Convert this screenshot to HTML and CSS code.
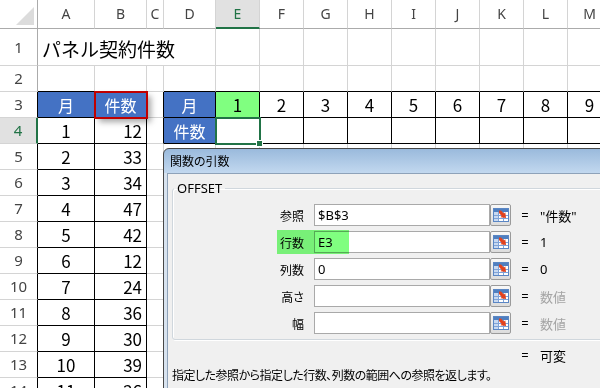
FILE: index.html
```html
<!DOCTYPE html>
<html lang="ja">
<head>
<meta charset="utf-8">
<title>パネル契約件数 - OFFSET</title>
<link rel="stylesheet" href="styles.css">
</head>
<body>
<div class="sheet">
  <div class="corner"></div><div class="ch">A</div><div class="ch">B</div><div class="ch">C</div><div class="ch">D</div><div class="ch on">E</div><div class="ch">F</div><div class="ch">G</div><div class="ch">H</div><div class="ch">I</div><div class="ch">J</div><div class="ch">K</div><div class="ch">L</div><div class="ch">M</div>

  <div class="rh">1</div><div class="title">パネル契約件数</div><div></div><div></div><div></div><div></div><div></div><div></div><div></div><div></div><div></div>

  <div class="rh">2</div><div class="bb"></div><div class="bb"></div><div></div><div class="bb"></div><div class="bb"></div><div class="bb"></div><div class="bb"></div><div class="bb"></div><div class="bb"></div><div class="bb"></div><div class="bb"></div><div class="bb"></div><div class="bb"></div>

  <div class="rh br">3</div><div class="bk hd">月</div><div class="bk hd ref">件数</div><div class="br"></div><div class="bk hd">月</div><div class="bk hit">1</div><div class="bk">2</div><div class="bk">3</div><div class="bk">4</div><div class="bk">5</div><div class="bk">6</div><div class="bk">7</div><div class="bk">8</div><div class="bk">9</div>

  <div class="rh on">4</div><div class="bk">1</div><div class="bk num">12</div><div class="br"></div><div class="bk hd">件数</div><div class="bk cur"></div><div class="bk"></div><div class="bk"></div><div class="bk"></div><div class="bk"></div><div class="bk"></div><div class="bk"></div><div class="bk"></div><div class="bk"></div>

  <div class="rh br">5</div><div class="bk">2</div><div class="bk num">33</div><div></div><div></div><div></div><div></div><div></div><div></div><div></div><div></div><div></div><div></div><div></div>
  <div class="rh br">6</div><div class="bk">3</div><div class="bk num">34</div><div></div><div></div><div></div><div></div><div></div><div></div><div></div><div></div><div></div><div></div><div></div>
  <div class="rh br">7</div><div class="bk">4</div><div class="bk num">47</div><div></div><div></div><div></div><div></div><div></div><div></div><div></div><div></div><div></div><div></div><div></div>
  <div class="rh br">8</div><div class="bk">5</div><div class="bk num">42</div><div></div><div></div><div></div><div></div><div></div><div></div><div></div><div></div><div></div><div></div><div></div>
  <div class="rh br">9</div><div class="bk">6</div><div class="bk num">12</div><div></div><div></div><div></div><div></div><div></div><div></div><div></div><div></div><div></div><div></div><div></div>
  <div class="rh br">10</div><div class="bk">7</div><div class="bk num">24</div><div></div><div></div><div></div><div></div><div></div><div></div><div></div><div></div><div></div><div></div><div></div>
  <div class="rh br">11</div><div class="bk">8</div><div class="bk num">36</div><div></div><div></div><div></div><div></div><div></div><div></div><div></div><div></div><div></div><div></div><div></div>
  <div class="rh br">12</div><div class="bk">9</div><div class="bk num">30</div><div></div><div></div><div></div><div></div><div></div><div></div><div></div><div></div><div></div><div></div><div></div>
  <div class="rh br">13</div><div class="bk">10</div><div class="bk num">39</div><div></div><div></div><div></div><div></div><div></div><div></div><div></div><div></div><div></div><div></div><div></div>
  <div class="rh br">14</div><div class="bk">11</div><div class="bk num">26</div><div></div><div></div><div></div><div></div><div></div><div></div><div></div><div></div><div></div><div></div><div></div>
</div>

<!-- 関数の引数 ダイアログ -->
<div class="dlg">
  <div class="dlg-title">関数の引数</div>
  <div class="dlg-body">
    <fieldset class="args">
      <legend>OFFSET</legend>
      <div class="arg">
        <label>参照</label><div class="box">$B$3</div>
        <span class="pick"><svg width="16" height="14" viewBox="0 0 16 14"><rect x="0.5" y="0.5" width="15" height="13" fill="#fff" stroke="#5a86c4"/><rect x="1" y="1" width="14" height="3" fill="#4f7fc0"/><rect x="1" y="4" width="4" height="9" fill="#c8d9f1"/><path d="M1 7.5H15M1 10.5H15M5.5 4V13M10.5 4V13" stroke="#7fa3d8"/><path d="M6 2.5L8 2.5L11 5.5L12.3 4.3L13 10L7.4 9.3L8.7 8L6 5Z" fill="#e2421d"/></svg></span>
        <span class="eq">=</span><span class="val">"件数"</span>
      </div>
      <div class="arg">
        <label>行数</label><div class="box">E3</div>
        <span class="pick"><svg width="16" height="14" viewBox="0 0 16 14"><rect x="0.5" y="0.5" width="15" height="13" fill="#fff" stroke="#5a86c4"/><rect x="1" y="1" width="14" height="3" fill="#4f7fc0"/><rect x="1" y="4" width="4" height="9" fill="#c8d9f1"/><path d="M1 7.5H15M1 10.5H15M5.5 4V13M10.5 4V13" stroke="#7fa3d8"/><path d="M6 2.5L8 2.5L11 5.5L12.3 4.3L13 10L7.4 9.3L8.7 8L6 5Z" fill="#e2421d"/></svg></span>
        <span class="eq">=</span><span class="val">1</span>
      </div>
      <div class="arg">
        <label>列数</label><div class="box">0</div>
        <span class="pick"><svg width="16" height="14" viewBox="0 0 16 14"><rect x="0.5" y="0.5" width="15" height="13" fill="#fff" stroke="#5a86c4"/><rect x="1" y="1" width="14" height="3" fill="#4f7fc0"/><rect x="1" y="4" width="4" height="9" fill="#c8d9f1"/><path d="M1 7.5H15M1 10.5H15M5.5 4V13M10.5 4V13" stroke="#7fa3d8"/><path d="M6 2.5L8 2.5L11 5.5L12.3 4.3L13 10L7.4 9.3L8.7 8L6 5Z" fill="#e2421d"/></svg></span>
        <span class="eq">=</span><span class="val">0</span>
      </div>
      <div class="arg">
        <label>高さ</label><div class="box"></div>
        <span class="pick"><svg width="16" height="14" viewBox="0 0 16 14"><rect x="0.5" y="0.5" width="15" height="13" fill="#fff" stroke="#5a86c4"/><rect x="1" y="1" width="14" height="3" fill="#4f7fc0"/><rect x="1" y="4" width="4" height="9" fill="#c8d9f1"/><path d="M1 7.5H15M1 10.5H15M5.5 4V13M10.5 4V13" stroke="#7fa3d8"/><path d="M6 2.5L8 2.5L11 5.5L12.3 4.3L13 10L7.4 9.3L8.7 8L6 5Z" fill="#e2421d"/></svg></span>
        <span class="eq">=</span><span class="val dim">数値</span>
      </div>
      <div class="arg">
        <label>幅</label><div class="box"></div>
        <span class="pick"><svg width="16" height="14" viewBox="0 0 16 14"><rect x="0.5" y="0.5" width="15" height="13" fill="#fff" stroke="#5a86c4"/><rect x="1" y="1" width="14" height="3" fill="#4f7fc0"/><rect x="1" y="4" width="4" height="9" fill="#c8d9f1"/><path d="M1 7.5H15M1 10.5H15M5.5 4V13M10.5 4V13" stroke="#7fa3d8"/><path d="M6 2.5L8 2.5L11 5.5L12.3 4.3L13 10L7.4 9.3L8.7 8L6 5Z" fill="#e2421d"/></svg></span>
        <span class="eq">=</span><span class="val dim">数値</span>
      </div>
    </fieldset>
    <div class="result"><span class="eq">=</span><span class="val">可変</span></div>
    <p class="desc">指定した参照から指定した行数、列数の範囲への参照を返します。</p>
  </div>
  <div class="mark"></div>
</div>
</body>
</html>
```

FILE: styles.css
```css
body {
  margin: 0;
  width: 600px;
  height: 388px;
  overflow: hidden;
  position: relative;
  background: #fff;
  font-family: "Noto Sans CJK JP", sans-serif;
}

/* シート */
.sheet {
  display: grid;
  grid-template-columns: 38px 57px 52px 17px 52px repeat(9, 44px);
  grid-template-rows: 29px 37px repeat(13, 26px);
  width: 612px;
}
.sheet > div {
  box-sizing: border-box;
  border-right: 1px solid #d4d4d4;
  border-bottom: 1px solid #d4d4d4;
  display: flex;
  align-items: center;
  justify-content: center;
  font-size: 17px;
  line-height: 1;
  color: #000;
  white-space: nowrap;
}
.sheet > .corner {
  justify-content: flex-end;
  align-items: flex-end;
  padding: 0 3px 3px 0;
  border-right-color: #ababab;
  border-bottom-color: #ababab;
}
.corner::before {
  content: "";
  border-left: 18px solid transparent;
  border-bottom: 18px solid #dcdcdc;
}
.sheet > .ch {
  font-family: "Noto Sans", sans-serif;
  font-size: 14px;
  color: #444;
  border-bottom-color: #ababab;
}
.sheet > .rh {
  font-family: "Noto Sans", sans-serif;
  font-size: 15px;
  color: #444;
  border-right-color: #ababab;
}
.sheet > .ch.on {
  background: #e1e1e1;
  color: #217346;
  border-bottom: 2px solid #217346;
}
.sheet > .rh.on {
  background: #e1e1e1;
  color: #217346;
  border-right: 2px solid #217346;
}
.sheet > .title {
  grid-column: span 4;
  justify-content: flex-start;
  align-items: flex-end;
  padding: 0 0 7px 4px;
  font-size: 19px;
}
.sheet > .bk {
  border-right-color: #000;
  border-bottom-color: #000;
}
.sheet > .bb { border-bottom-color: #000; }
.sheet > .br { border-right-color: #000; }
.sheet > .hd {
  background: #4472c4;
  color: #fff;
  font-size: 16px;
}
.sheet > .num {
  justify-content: flex-end;
  padding-right: 4px;
}
.sheet > .hit { background: #80ff80; }
.sheet > .ref {
  position: relative;
  z-index: 1;
  outline: 2px solid #c00000;
  outline-offset: -1px;
  box-shadow: 4px 4px 6px rgba(0, 0, 0, 0.35);
}
.sheet > .cur {
  position: relative;
  outline: 2px solid #217346;
  outline-offset: -1px;
}
.cur::after {
  content: "";
  position: absolute;
  right: -4px;
  bottom: -4px;
  width: 5px;
  height: 5px;
  background: #217346;
  border: 1px solid #fff;
}

/* ダイアログ */
.dlg {
  position: absolute;
  left: 163px;
  top: 148px;
  width: 460px;
  height: 260px;
  border: 1px solid #474747;
  border-radius: 6px 0 0 0;
  padding-left: 3px;
  background: linear-gradient(#9abadc, #c2d8ef 24px, #d8e3ef 24px);
  font-size: 12px;
  font-feature-settings: "palt";
  color: #000;
}
.dlg-title {
  height: 24px;
  line-height: 24px;
  padding-left: 3px;
}
.dlg-body {
  height: 100%;
  background: #f0f0f0;
  border-top: 1px solid #8ea2b9;
  border-left: 1px solid #8ea2b9;
  padding: 6px 0 0 4px;
}
.args {
  margin: 0;
  width: 440px;
  min-inline-size: 0;
  padding: 8px 0 5px 0;
  border: 1px solid #d0d7dd;
  border-radius: 3px;
  box-shadow: inset 1px 1px 0 #fff, 1px 1px 0 #fff;
}
.args legend {
  padding: 0 3px;
  margin-left: 1px;
  font-family: "Noto Sans", sans-serif;
  font-size: 13px;
  line-height: 16px;
}
.arg {
  display: flex;
  align-items: center;
  height: 22px;
  margin-bottom: 5px;
}
.arg:last-child { margin-bottom: 0; }
.arg label {
  width: 131px;
  margin-right: 10px;
  text-align: right;
}
.box {
  box-sizing: border-box;
  width: 176px;
  height: 22px;
  border: 1px solid #a9a9a9;
  background: #fff;
  padding-left: 3px;
  font-family: "Noto Sans", sans-serif;
  font-size: 13px;
  line-height: 20px;
}
.pick {
  box-sizing: border-box;
  width: 21px;
  height: 22px;
  border: 1px solid #9a9a9a;
  border-radius: 2px;
  background: linear-gradient(#f8f8f8, #dcdcdc);
  display: flex;
  align-items: center;
  justify-content: center;
}
.eq {
  width: 14px;
  margin-left: 7px;
  text-align: center;
  font-family: "Noto Sans", sans-serif;
  font-size: 13px;
}
.val {
  margin-left: 8px;
  font-family: "Noto Sans", "Noto Sans CJK JP", sans-serif;
  font-size: 13px;
}
.val.dim { color: #a4a4a4; }
.result {
  display: flex;
  align-items: center;
  height: 16px;
  margin-top: 7px;
  padding-left: 339px;
}
.desc {
  margin: 4px 0 0;
  line-height: 16px;
  letter-spacing: -0.5px;
}
.mark {
  position: absolute;
  left: 113px;
  top: 81px;
  width: 72px;
  height: 24px;
  background: #80ff80;
  mix-blend-mode: multiply;
}
```
